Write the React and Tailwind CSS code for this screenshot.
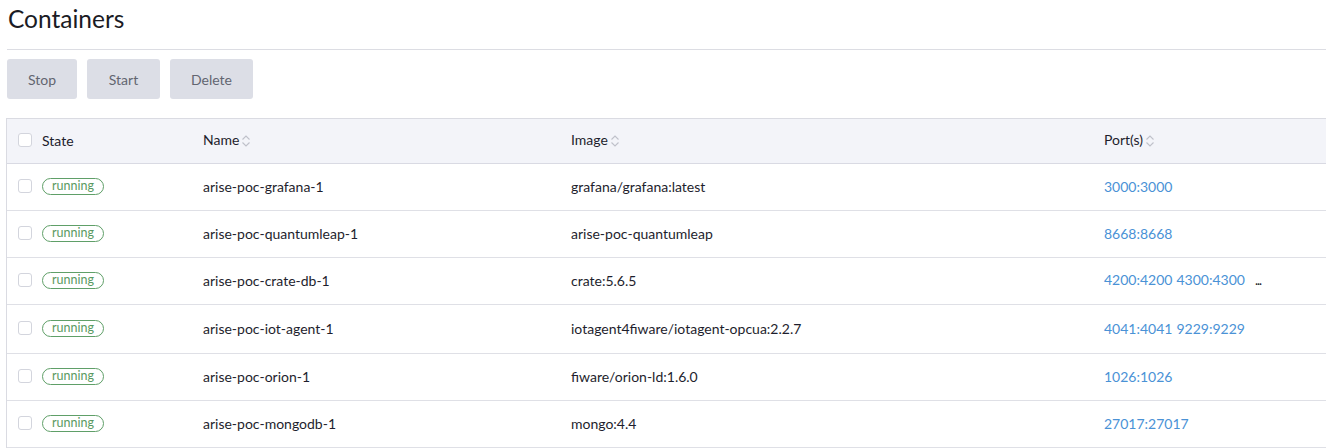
import React from "react";

const rows = [
  { name: "arise-poc-grafana-1", image: "grafana/grafana:latest", ports: ["3000:3000"], h: "h-[47px]" },
  { name: "arise-poc-quantumleap-1", image: "arise-poc-quantumleap", ports: ["8668:8668"], h: "h-[47px]" },
  { name: "arise-poc-crate-db-1", image: "crate:5.6.5", ports: ["4200:4200", "4300:4300"], more: true, h: "h-[47px]" },
  { name: "arise-poc-iot-agent-1", image: "iotagent4fiware/iotagent-opcua:2.2.7", ports: ["4041:4041", "9229:9229"], h: "h-[49px]" },
  { name: "arise-poc-orion-1", image: "fiware/orion-ld:1.6.0", ports: ["1026:1026"], h: "h-[47px]" },
  { name: "arise-poc-mongodb-1", image: "mongo:4.4", ports: ["27017:27017"], h: "h-[47px]" },
];

const cols = "grid grid-cols-[185px_368px_533px_1fr]";

const Checkbox = () => (
  <span className="inline-block w-[14px] h-[14px] rounded-[3px] border border-[#d3d5dd] bg-white" />
);

const SortIcon = () => (
  <svg width="10" height="16" viewBox="0 0 10 16" className="ml-[2px] mt-[3px]">
    <path d="M1.5 6.5 L5 3 L8.5 6.5" fill="none" stroke="#bfc1ca" strokeWidth="1.1" />
    <path d="M1.5 9.5 L5 13 L8.5 9.5" fill="none" stroke="#bfc1ca" strokeWidth="1.1" />
  </svg>
);

const App = () => {
  return (
    <div className="w-[1326px] h-[448px] overflow-hidden bg-white font-['Lato','Noto_Sans',sans-serif] text-[#1e1e2d]">
      <div className="pl-[7px]">
        <h1 className="pl-[1px] pt-[3px] h-[49px] text-[24.5px] leading-[32px] text-[#1b1b24]">Containers</h1>
        <div className="border-t border-[#dcdde3]" />
        <div className="flex gap-[10px] pt-[9px] h-[68px]">
          <button className="w-[70px] h-[40px] rounded-[3px] bg-[#dcdee6] text-[14px] text-[#626570]">Stop</button>
          <button className="w-[73px] h-[40px] rounded-[3px] bg-[#dcdee6] text-[14px] text-[#626570]">Start</button>
          <button className="w-[83px] h-[40px] rounded-[3px] bg-[#dcdee6] text-[14px] text-[#626570]">Delete</button>
        </div>
      </div>

      <div className="ml-[6px] border-l border-t border-[#dadbe2] text-[14px]">
        <div className={`${cols} h-[45px] items-center pb-[2px] bg-[#f3f4f9] border-b border-[#d9dae3]`}>
          <div className="flex items-center pl-[11px]">
            <Checkbox />
            <span className="ml-[10px] text-[#20202b]">State</span>
          </div>
          <div className="flex items-center pl-[11px] -mt-[2px]">
            <span>Name</span>
            <SortIcon />
          </div>
          <div className="flex items-center pl-[11px] -mt-[2px]">
            <span>Image</span>
            <SortIcon />
          </div>
          <div className="flex items-center pl-[11px] -mt-[2px]">
            <span>Port(s)</span>
            <SortIcon />
          </div>
        </div>

        {rows.map((r) => (
          <div key={r.name} className={`${cols} ${r.h} items-center pb-[2px] border-b border-[#dfe0e6]`}>
            <div className="flex items-center pl-[11px]">
              <Checkbox />
              <span className="ml-[10px] inline-flex items-center justify-center w-[62px] h-[17px] rounded-full border border-[#5f9f68] text-[12.5px] leading-none text-[#5a9a62]">
                running
              </span>
            </div>
            <div className="pl-[11px]">{r.name}</div>
            <div className="pl-[11px]">{r.image}</div>
            <div className="pl-[11px] flex items-baseline text-[#4a92d6]">
              {r.ports.map((p, i) => (
                <span key={p} className={i > 0 ? "ml-[4px]" : ""}>{p}</span>
              ))}
              {r.more && <span className="ml-[10px] text-[#20202b] text-[13px] tracking-[-1px]">...</span>}
            </div>
          </div>
        ))}
      </div>
    </div>
  );
};

export default App;
